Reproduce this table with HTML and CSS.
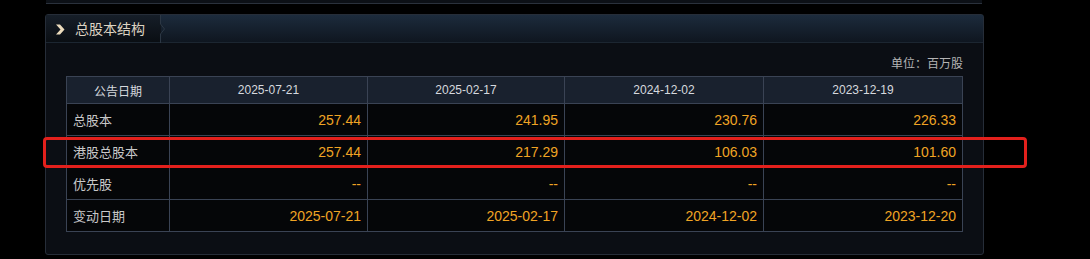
FILE: index.html
```html
<!DOCTYPE html>
<html lang="zh">
<head>
<meta charset="utf-8">
<link rel="stylesheet" href="styles.css">
</head>
<body>
<div class="prev"></div>
<section class="panel">
  <div class="head">
    <div class="tab">
      <svg class="chev" width="10" height="11" viewBox="0 0 10 11"><path d="M1 0.5 L5 0.5 L9.5 5.5 L5 10.5 L1 10.5 L5.5 5.5 Z" fill="#ecdcbd"/></svg>
      <span class="title">总股本结构</span>
      <svg class="notch" width="6" height="28" viewBox="0 0 6 28"><path d="M0.5 0 L0.5 9 L4.5 14 L0.5 19 L0.5 28" fill="none" stroke="#2c3744" stroke-width="1"/></svg>
    </div>
  </div>
  <div class="body">
    <div class="unit">单位：百万股</div>
    <table class="grid">
      <colgroup><col class="c0"><col class="c1"><col class="c2"><col class="c3"><col class="c4"></colgroup>
      <thead>
        <tr><th>公告日期</th><th>2025-07-21</th><th>2025-02-17</th><th>2024-12-02</th><th>2023-12-19</th></tr>
      </thead>
      <tbody>
        <tr><td class="lab">总股本</td><td>257.44</td><td>241.95</td><td>230.76</td><td>226.33</td></tr>
        <tr><td class="lab">港股总股本</td><td>257.44</td><td>217.29</td><td>106.03</td><td>101.60</td></tr>
        <tr><td class="lab">优先股</td><td>--</td><td>--</td><td>--</td><td>--</td></tr>
        <tr><td class="lab">变动日期</td><td>2025-07-21</td><td>2025-02-17</td><td>2024-12-02</td><td>2023-12-20</td></tr>
      </tbody>
    </table>
  </div>
</section>
<div class="highlight"></div>
</body>
</html>
```
FILE: styles.css
```css
html, body {
  margin: 0;
  padding: 0;
  background: #000;
}
body {
  width: 1090px;
  height: 259px;
  overflow: hidden;
  position: relative;
  font-family: "Liberation Sans", "Noto Sans CJK SC", sans-serif;
}
.prev {
  margin-left: 46px;
  width: 936px;
  height: 3px;
  background: #0c1016;
  border-bottom: 1px solid #2a313c;
}
.panel {
  margin-top: 10px;
  margin-left: 45px;
  width: 937px;
  border: 1px solid #262d38;
  border-radius: 3px;
  background: #0b0e14;
}
.head {
  height: 27px;
  border-bottom: 1px solid #1c2631;
  background: linear-gradient(#1c2b3c, #0f1620);
  display: flex;
}
.tab {
  width: 115px;
  height: 27px;
  display: flex;
  align-items: center;
  background: linear-gradient(#161e28, #0a0e13);
  position: relative;
}
.chev {
  margin-left: 9px;
  margin-top: 1px;
}
.title {
  margin-left: 10px;
  font-family: "Noto Sans CJK SC", sans-serif;
  font-size: 14px;
  color: #ddd3c2;
  line-height: 27px;
}
.notch {
  position: absolute;
  right: -5px;
  top: 0;
}
.body {
  padding: 11px 20px 22px 20px;
}
.unit {
  text-align: right;
  font-family: "Noto Sans CJK SC", sans-serif;
  font-size: 12px;
  color: #b4b4b4;
  height: 18px;
  line-height: 18px;
  margin-bottom: 4px;
}
.grid {
  width: 896px;
  border-collapse: collapse;
  table-layout: fixed;
}
.c0 { width: 103px; }
.c1 { width: 198px; }
.c2 { width: 197px; }
.c3 { width: 199px; }
.c4 { width: 199px; }
.grid th, .grid td {
  border: 1px solid #3a4354;
  padding: 0 6px;
}
.grid th {
  height: 26px;
  background: #19212e;
  color: #d6d9de;
  font-size: 12px;
  font-weight: normal;
  text-align: center;
}
.grid th:first-child {
  font-family: "Noto Sans CJK SC", sans-serif;
}
.grid td {
  height: 31px;
  background: #050608;
  color: #f0a424;
  font-size: 14px;
  text-align: right;
}
.grid td.lab {
  text-align: left;
  font-family: "Noto Sans CJK SC", sans-serif;
  font-size: 13px;
  color: #c8c8c8;
}
.highlight {
  position: absolute;
  left: 43px;
  top: 137px;
  width: 978px;
  height: 25px;
  border: 3px solid #e3201c;
  border-radius: 4px;
}
```
